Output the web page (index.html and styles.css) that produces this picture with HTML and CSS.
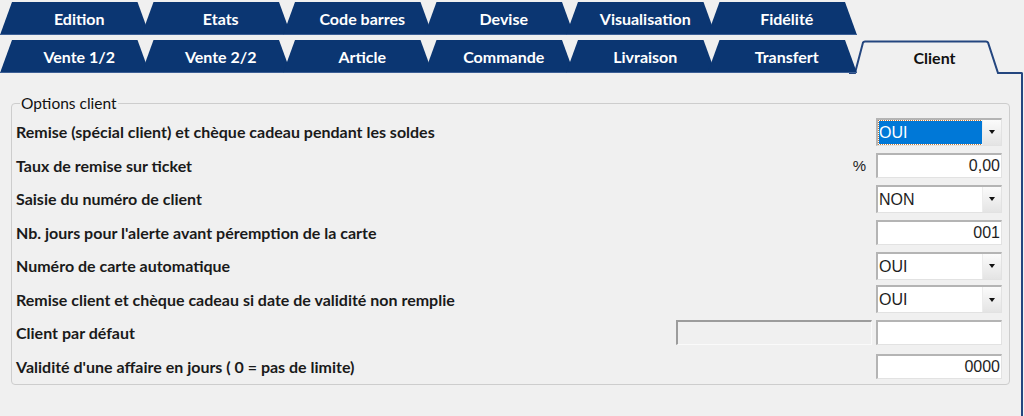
FILE: index.html
```html
<!DOCTYPE html>
<html lang="fr">
<head>
<meta charset="utf-8">
<title>Options client</title>
<link rel="stylesheet" href="styles.css">
</head>
<body>
<div class="window">
  <div class="tabrow">
    <div class="tab">Edition</div>
    <div class="tab">Etats</div>
    <div class="tab">Code barres</div>
    <div class="tab">Devise</div>
    <div class="tab">Visualisation</div>
    <div class="tab">Fidélité</div>
  </div>
  <div class="tabrow row2">
    <div class="tab">Vente 1/2</div>
    <div class="tab">Vente 2/2</div>
    <div class="tab">Article</div>
    <div class="tab">Commande</div>
    <div class="tab">Livraison</div>
    <div class="tab">Transfert</div>
    <div class="tab active">
      <svg class="tab-outline" width="150" height="34" viewBox="0 0 150 34"><path d="M0 33 L6 33 L14 2.5 Q14.5 1.5 16 1.5 L137 1.5 Q138.5 1.5 139 2.5 L149 33 L150 33" fill="#f0f0f0" stroke="#24467f" stroke-width="2"/></svg>
      <span class="tab-label">Client</span>
    </div>
    <div class="tab-fill"></div>
  </div>
  <div class="panel">
    <fieldset class="group">
      <legend>Options client</legend>
      <div class="row">
        <span class="label">Remise (spécial client) et chèque cadeau pendant les soldes</span>
        <div class="select focused"><span class="val"><span class="sel">OUI</span></span><span class="btn"><i class="arrow"></i></span></div>
      </div>
      <div class="row">
        <span class="label">Taux de remise sur ticket</span>
        <span class="pct">%</span>
        <div class="field num">0,00</div>
      </div>
      <div class="row">
        <span class="label">Saisie du numéro de client</span>
        <div class="select"><span class="val">NON</span><span class="btn"><i class="arrow"></i></span></div>
      </div>
      <div class="row">
        <span class="label">Nb. jours pour l'alerte avant péremption de la carte</span>
        <div class="field num">001</div>
      </div>
      <div class="row">
        <span class="label">Numéro de carte automatique</span>
        <div class="select"><span class="val">OUI</span><span class="btn"><i class="arrow"></i></span></div>
      </div>
      <div class="row">
        <span class="label">Remise client et chèque cadeau si date de validité non remplie</span>
        <div class="select"><span class="val">OUI</span><span class="btn"><i class="arrow"></i></span></div>
      </div>
      <div class="row">
        <span class="label">Client par défaut</span>
        <div class="field ro"></div>
        <div class="field"></div>
      </div>
      <div class="row">
        <span class="label">Validité d'une affaire en jours ( 0 = pas de limite)</span>
        <div class="field num">0000</div>
      </div>
    </fieldset>
  </div>
</div>
</body>
</html>
```

FILE: styles.css
```css
html, body {
  margin: 0;
  padding: 0;
  background: #f0f0f0;
}

.window {
  width: 1024px;
  height: 416px;
  overflow: hidden;
  font-family: Lato, "Open Sans", "Liberation Sans", sans-serif;
}

.tabrow {
  display: flex;
  height: 33px;
  margin-top: 2px;
}

.row2 {
  margin-top: 5px;
  height: 34px;
}

.tab {
  flex: 0 0 149.5px;
  height: 33px;
  box-sizing: border-box;
  padding-left: 9px;
  background: #0b3672;
  color: #fff;
  font-weight: 700;
  font-size: 16px;
  line-height: 34px;
  text-align: center;
  clip-path: polygon(0 100%, 12px 0, calc(100% - 12px) 0, 100% 100%);
  box-shadow: inset 0 -1px 0 #3c5f95;
}

.tab + .tab {
  margin-left: -8px;
}

.tab.active {
  display: grid;
  height: 34px;
  padding: 0;
  background: transparent;
  clip-path: none;
  box-shadow: none;
  color: #111;
}

.tab-outline,
.tab-label {
  grid-area: 1 / 1;
}

.tab-outline {
  display: block;
}

.tab-label {
  padding-left: 21px;
  line-height: 35px;
  text-align: center;
}

.tab-fill {
  flex: 1;
  align-self: flex-end;
  height: 0;
  margin-right: 1px;
  border-top: 2px solid #24467f;
  border-right: 2px solid #24467f;
  border-top-right-radius: 3px;
}

.panel {
  height: 342px;
  margin-right: 1px;
  border-right: 2px solid #24467f;
  padding: 20px 11px 0 11px;
}

.group {
  margin: 0;
  min-width: 0;
  padding: 3px 7px 1px 4px;
  border: 1px solid #cdcdcd;
  border-radius: 4px;
}

.group legend {
  margin-left: 4px;
  padding: 0 1px;
  font-size: 15.5px;
  line-height: 18px;
  color: #111;
}

.row {
  display: flex;
  align-items: center;
  height: 33.5px;
}

.label {
  flex: 1;
  font-size: 16px;
  font-weight: 700;
  color: #1a1a1a;
  white-space: nowrap;
}

.pct {
  margin-right: 10px;
  font-family: "Liberation Sans", Arial, sans-serif;
  font-size: 15px;
  color: #222;
}

.field,
.select {
  flex: 0 0 126px;
  box-sizing: border-box;
  height: 25px;
  background: #fff;
  border-style: solid;
  border-width: 2px 1px 1px 2px;
  border-color: #b4b4b4 #e2e2e2 #e2e2e2 #b4b4b4;
  font-family: "Liberation Sans", Arial, sans-serif;
  font-size: 16px;
  line-height: 22px;
  color: #1e1e1e;
}

.num {
  text-align: right;
  padding-right: 1px;
}

.field.ro {
  flex: 0 0 196px;
  margin-right: 4px;
  background: #f0f0f0;
  border-color: #9c9c9c #fafafa #fafafa #9c9c9c;
}

.select {
  display: flex;
  height: 28px;
  line-height: 25px;
}

.select .val {
  flex: 1;
  padding-left: 1px;
}

.select .btn {
  flex: 0 0 18px;
  display: flex;
  align-items: center;
  justify-content: center;
  background: linear-gradient(#fbfbfb, #e4e4e4);
  border-left: 1px solid #ececec;
}

.arrow {
  width: 0;
  height: 0;
  border-left: 3px solid transparent;
  border-right: 3px solid transparent;
  border-top: 4px solid #111;
}

.select.focused .val {
  display: flex;
  padding: 1px 0 1px 1px;
}

.select.focused .sel {
  flex: 1;
  background: #0078d7;
  color: #fff;
  line-height: 23px;
  outline: 1px dotted #c07a3a;
}
```
